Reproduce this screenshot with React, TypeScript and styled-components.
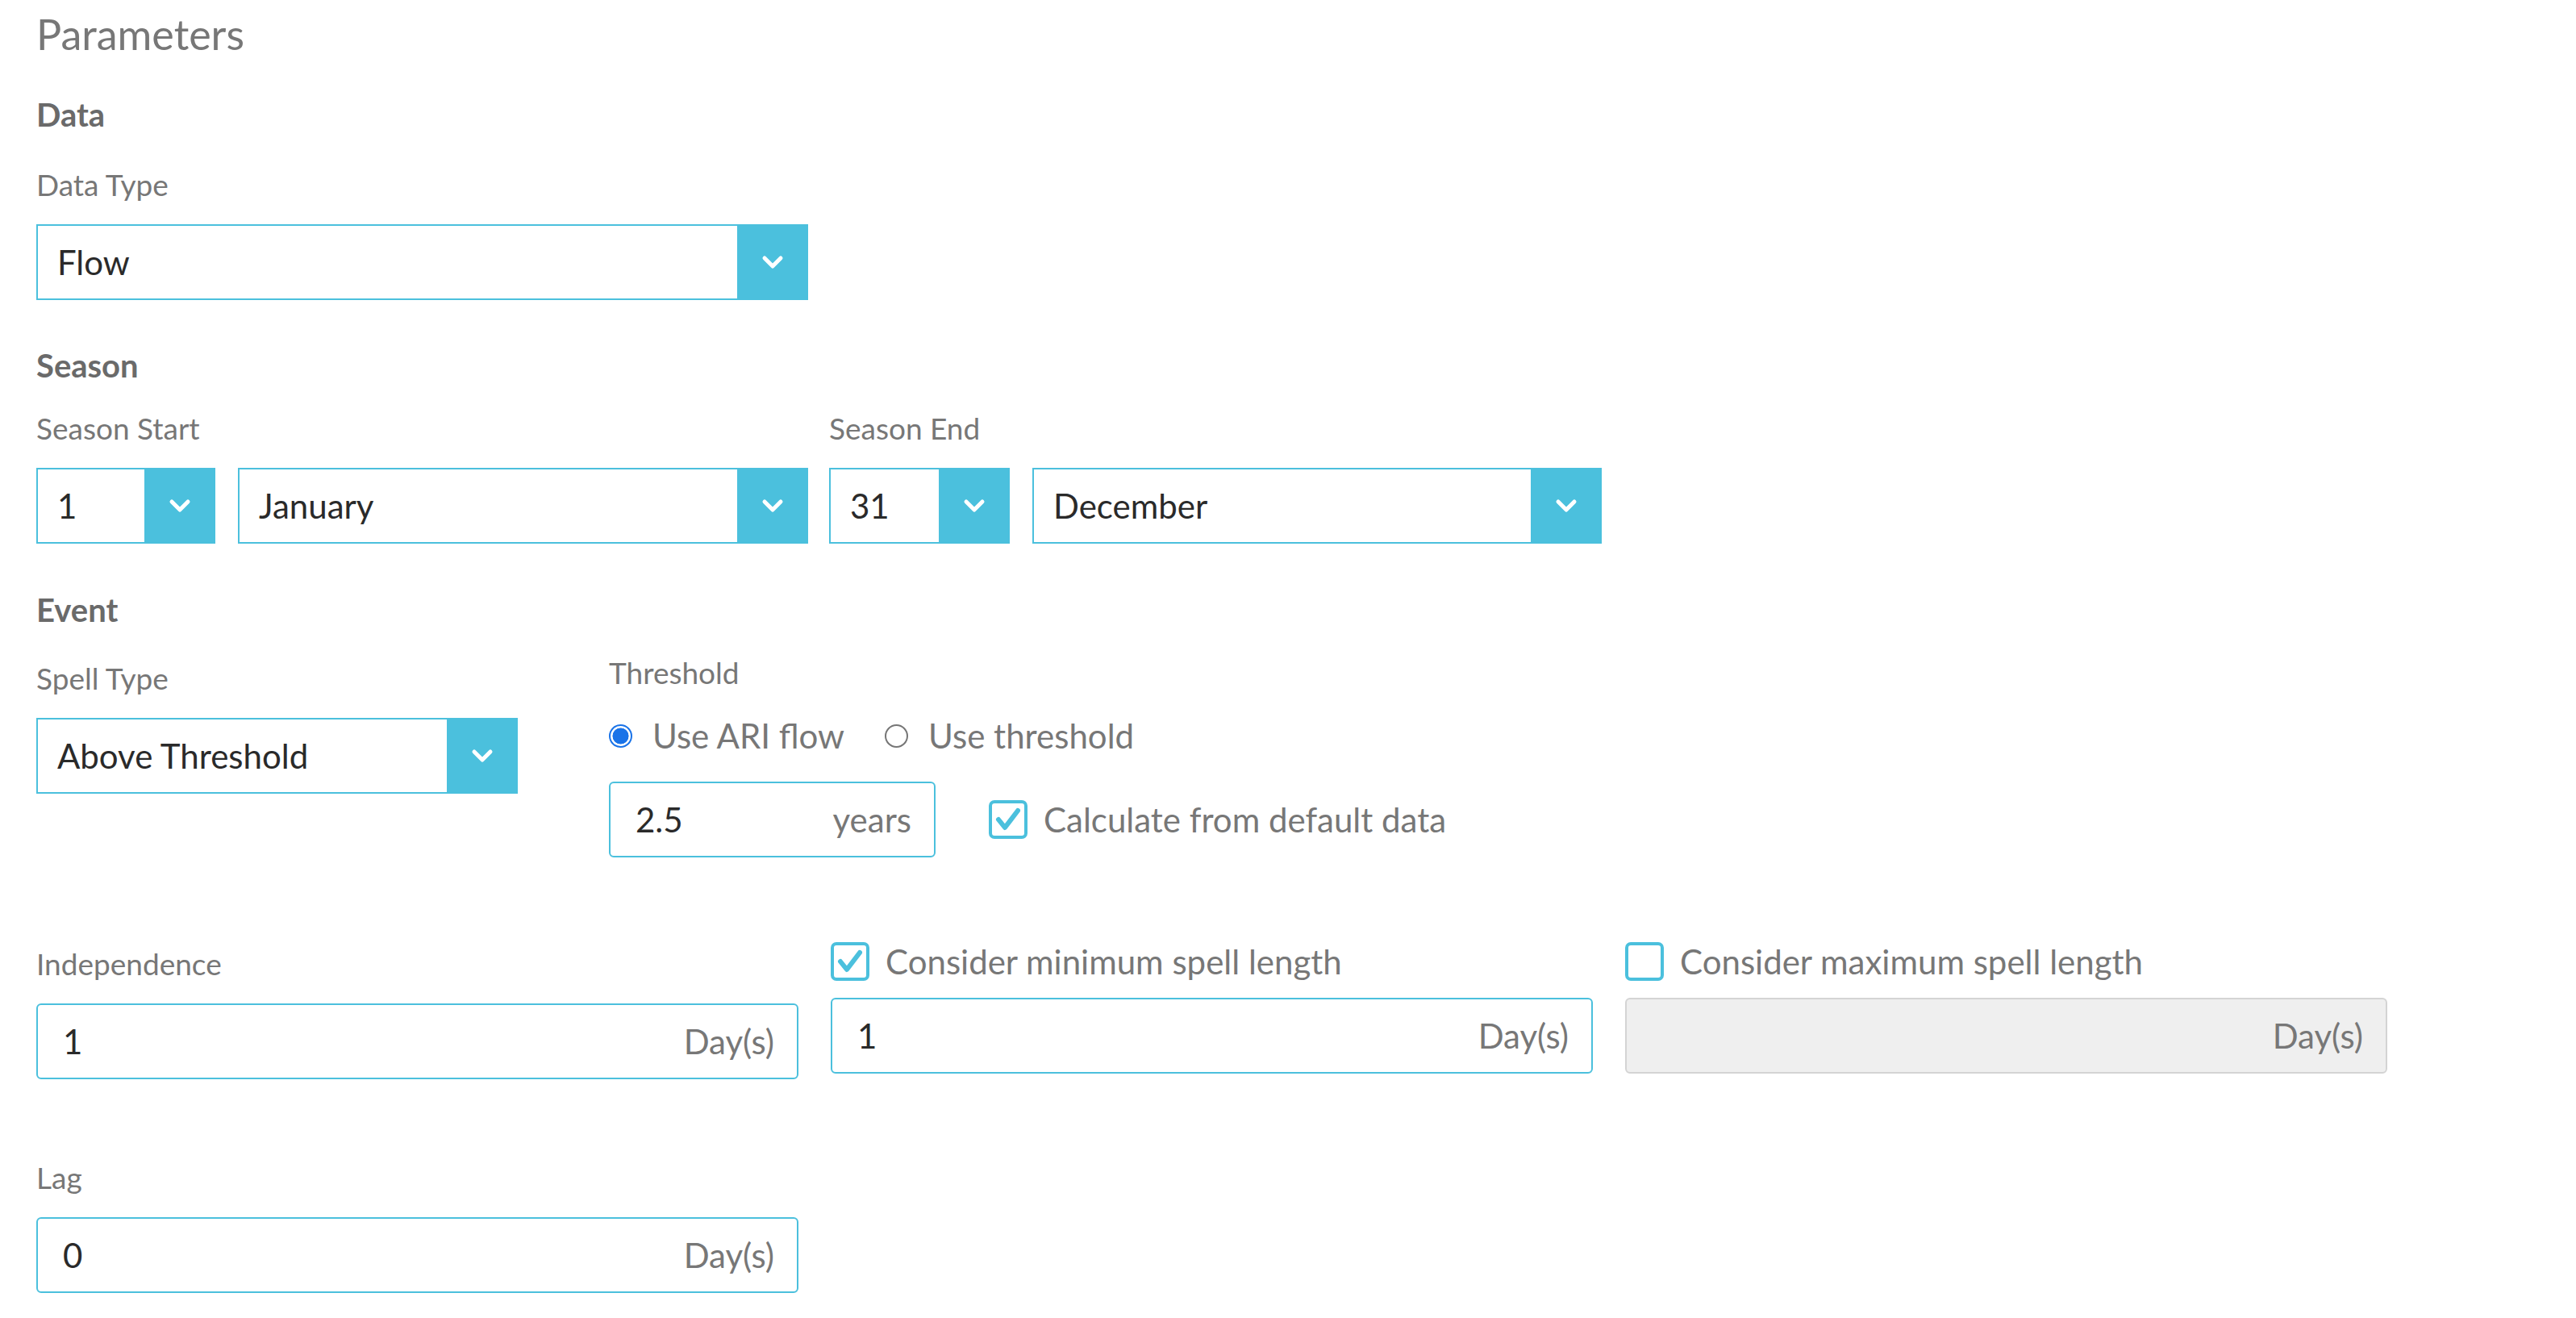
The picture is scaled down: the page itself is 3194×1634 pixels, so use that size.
import React from 'react';
import styled, { createGlobalStyle } from 'styled-components';

const GlobalStyle = createGlobalStyle`
  html, body {
    margin: 0;
    padding: 0;
    background: #ffffff;
  }
  body {
    font-family: Lato, "Open Sans", "Liberation Sans", sans-serif;
  }
`;

const CYAN = '#4bc0dd';

const Page = styled.div`
  padding: 13px 45px 28px;
  color: #777;
`;

const Title = styled.h1`
  margin: 0;
  font-size: 52px;
  line-height: 58px;
  font-weight: 400;
  color: #777;
`;

const SectionTitle = styled.h2<{ $top: number }>`
  margin: ${({ $top }) => $top}px 0 0;
  font-size: 40px;
  line-height: 43px;
  font-weight: 700;
  color: #6a6a6a;
`;

const Field = styled.div<{ $width?: number }>`
  display: flex;
  flex-direction: column;
  width: ${({ $width }) => ($width ? `${$width}px` : 'auto')};
  flex-shrink: 0;
`;

const Label = styled.div<{ $top?: number; $bottom?: number }>`
  margin-top: ${({ $top }) => $top ?? 37}px;
  margin-bottom: ${({ $bottom }) => $bottom ?? 30}px;
  font-size: 37px;
  line-height: 38px;
  color: #777;
`;

const Row = styled.div<{ $gap: number }>`
  display: flex;
  align-items: flex-start;
  gap: ${({ $gap }) => $gap}px;
`;

const Pair = styled.div`
  display: flex;
  gap: 28px;
`;

const SelectBox = styled.div<{ $width: number }>`
  box-sizing: border-box;
  width: ${({ $width }) => $width}px;
  height: 94px;
  display: flex;
  align-items: stretch;
  border: 2px solid ${CYAN};
  background: #fff;
`;

const SelectValue = styled.div`
  flex: 1;
  display: flex;
  align-items: center;
  padding-left: 24px;
  font-size: 42px;
  color: #2a2a2a;
  white-space: nowrap;
`;

const SelectButton = styled.div`
  width: 88px;
  margin: -2px -2px -2px 0;
  background: ${CYAN};
  display: flex;
  align-items: center;
  justify-content: center;
`;

const Chevron = () => (
  <svg width="30" height="20" viewBox="0 0 30 20">
    <polyline
      points="5,5 15,15 25,5"
      fill="none"
      stroke="#fff"
      strokeWidth="5"
      strokeLinecap="round"
      strokeLinejoin="round"
    />
  </svg>
);

const Select = ({ width, value }: { width: number; value: string }) => (
  <SelectBox $width={width}>
    <SelectValue>{value}</SelectValue>
    <SelectButton>
      <Chevron />
    </SelectButton>
  </SelectBox>
);

const InputBox = styled.div<{ $width: number; $disabled?: boolean }>`
  box-sizing: border-box;
  width: ${({ $width }) => $width}px;
  height: 94px;
  display: flex;
  align-items: center;
  justify-content: space-between;
  padding: 0 28px 0 31px;
  border: 2px solid ${({ $disabled }) => ($disabled ? '#d4d4d4' : CYAN)};
  border-radius: 6px;
  background: ${({ $disabled }) => ($disabled ? '#efefef' : '#fff')};
  font-size: 42px;
`;

const InputValue = styled.span`
  color: #2a2a2a;
`;

const Unit = styled.span`
  color: #777;
`;

const UnitInput = ({
  width,
  value,
  unit,
  disabled,
}: {
  width: number;
  value: string;
  unit: string;
  disabled?: boolean;
}) => (
  <InputBox $width={width} $disabled={disabled}>
    <InputValue>{value}</InputValue>
    <Unit>{unit}</Unit>
  </InputBox>
);

const RadioGroup = styled.div`
  display: flex;
  align-items: center;
  gap: 50px;
  margin-bottom: 34px;
`;

const RadioOption = styled.label`
  display: flex;
  align-items: center;
  gap: 25px;
  font-size: 42px;
  line-height: 46px;
  color: #777;
`;

const RadioDot = styled.span<{ $checked?: boolean }>`
  box-sizing: border-box;
  width: 29px;
  height: 29px;
  border-radius: 50%;
  border: 2px solid ${({ $checked }) => ($checked ? '#1a73e8' : '#767676')};
  background: ${({ $checked }) =>
    $checked ? 'radial-gradient(circle, #1a73e8 0 55%, #fff 58%)' : '#fff'};
`;

const CheckRow = styled.label`
  display: flex;
  align-items: center;
  gap: 20px;
  font-size: 42px;
  line-height: 46px;
  color: #777;
  white-space: nowrap;
`;

const CheckBox = styled.span`
  box-sizing: border-box;
  width: 48px;
  height: 48px;
  border: 4px solid ${CYAN};
  border-radius: 7px;
  display: flex;
  align-items: center;
  justify-content: center;
  background: #fff;
  flex-shrink: 0;
`;

const Check = ({ checked, label }: { checked?: boolean; label: string }) => (
  <CheckRow>
    <CheckBox>
      {checked && (
        <svg width="32" height="30" viewBox="0 0 32 30">
          <polyline
            points="4,15 12,25 28,4"
            fill="none"
            stroke={CYAN}
            strokeWidth="6"
            strokeLinecap="round"
            strokeLinejoin="round"
          />
        </svg>
      )}
    </CheckBox>
    {label}
  </CheckRow>
);

const ThresholdInputs = styled.div`
  display: flex;
  align-items: center;
  gap: 66px;
`;

const OptionsGrid = styled.div`
  margin-top: 105px;
  display: grid;
  grid-template-columns: repeat(3, 945px);
  column-gap: 40px;
  align-items: start;
`;

const CheckHead = styled.div`
  margin-bottom: 21px;
`;

export default function App() {
  return (
    <>
      <GlobalStyle />
      <Page>
        <Title>Parameters</Title>

        <SectionTitle $top={50}>Data</SectionTitle>
        <Field>
          <Label $top={46}>Data Type</Label>
          <Select width={957} value="Flow" />
        </Field>

        <SectionTitle $top={60}>Season</SectionTitle>
        <Row $gap={26}>
          <Field>
            <Label>Season Start</Label>
            <Pair>
              <Select width={222} value="1" />
              <Select width={707} value="January" />
            </Pair>
          </Field>
          <Field>
            <Label>Season End</Label>
            <Pair>
              <Select width={224} value="31" />
              <Select width={706} value="December" />
            </Pair>
          </Field>
        </Row>

        <SectionTitle $top={61}>Event</SectionTitle>
        <Row $gap={0}>
          <Field $width={710}>
            <Label $top={44}>Spell Type</Label>
            <Select width={597} value="Above Threshold" />
          </Field>
          <Field>
            <Label $bottom={36}>Threshold</Label>
            <RadioGroup>
              <RadioOption>
                <RadioDot $checked />
                Use ARI flow
              </RadioOption>
              <RadioOption>
                <RadioDot />
                Use threshold
              </RadioOption>
            </RadioGroup>
            <ThresholdInputs>
              <UnitInput width={405} value="2.5" unit="years" />
              <Check checked label="Calculate from default data" />
            </ThresholdInputs>
          </Field>
        </Row>

        <OptionsGrid>
          <Field>
            <Label $top={8}>Independence</Label>
            <UnitInput width={945} value="1" unit="Day(s)" />
          </Field>
          <Field>
            <CheckHead>
              <Check checked label="Consider minimum spell length" />
            </CheckHead>
            <UnitInput width={945} value="1" unit="Day(s)" />
          </Field>
          <Field>
            <CheckHead>
              <Check label="Consider maximum spell length" />
            </CheckHead>
            <UnitInput width={945} value="" unit="Day(s)" disabled />
          </Field>
        </OptionsGrid>

        <Field>
          <Label $top={103}>Lag</Label>
          <UnitInput width={945} value="0" unit="Day(s)" />
        </Field>
      </Page>
    </>
  );
}
